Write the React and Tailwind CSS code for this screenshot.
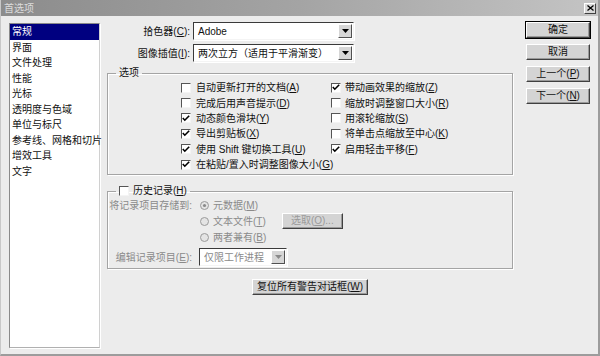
import React from 'react';

const font = "font-['Liberation_Sans','Noto_Sans_CJK_SC',sans-serif]";

// label with underlined mnemonic letter in parens
const M = ({ t, k }) => (
    <span className="whitespace-nowrap">
        {t}(<span className="underline underline-offset-1">{k}</span>)
    </span>
);

const Check = ({ checked }) => (
    <span className="w-[10px] h-[10px] shrink-0 bg-white border border-t-[#555] border-l-[#555] border-b-[#f4f4f4] border-r-[#f4f4f4] flex items-center justify-center">
        {checked && (
            <svg width="8" height="7" viewBox="0 0 8 7">
                <path d="M0.8 3 L2.8 5.2 L7.2 0.8" fill="none" stroke="#000" strokeWidth="1.6" />
            </svg>
        )}
    </span>
);

const Radio = ({ on }) => (
    <svg width="9" height="9" viewBox="0 0 9 9" className="shrink-0">
        <circle cx="4.5" cy="4.5" r="4" fill="#e4e4e4" stroke="#9a9a9a" />
        {on && <circle cx="4.5" cy="4.5" r="1.6" fill="#8a8a8a" />}
    </svg>
);

const Arrow = ({ disabled }) => (
    <span className="w-[14px] h-full shrink-0 bg-[#d6d6d6] border border-t-white border-l-white border-b-[#505050] border-r-[#505050] flex items-center justify-center">
        <svg width="7" height="4" viewBox="0 0 7 4">
            <path d="M0 0 H7 L3.5 4 Z" fill={disabled ? '#8a8a8a' : '#000'} />
        </svg>
    </span>
);

const Select = ({ value, w, disabled }) => (
    <div className={`${w} h-[18px] bg-white border border-t-[#3a3a3a] border-l-[#3a3a3a] border-b-[#f4f4f4] border-r-[#f4f4f4] shadow-[1px_1px_0_#fff] flex items-center p-px`}>
        <span className={`flex-1 pl-[3px] truncate ${disabled ? 'text-[#8a8a8a]' : ''}`}>{value}</span>
        <Arrow disabled={disabled} />
    </div>
);

const Btn = ({ children, def, disabled, className = '' }) => (
    <div className={`${className} ${def ? 'outline outline-1 outline-black' : ''} bg-[#d4d4d4] border border-t-white border-l-white border-b-[#404040] border-r-[#404040] shadow-[inset_-1px_-1px_0_#9a9a9a] flex items-center justify-center leading-none ${disabled ? 'text-[#9a9a9a]' : ''}`}>
        {children}
    </div>
);

const optLeft = [
    ['自动更新打开的文档', 'A', false],
    ['完成后用声音提示', 'D', false],
    ['动态颜色滑块', 'Y', true],
    ['导出剪贴板', 'X', true],
    ['使用 Shift 键切换工具', 'U', true],
    ['在粘贴/置入时调整图像大小', 'G', true],
];

const optRight = [
    ['带动画效果的缩放', 'Z', true],
    ['缩放时调整窗口大小', 'R', false],
    ['用滚轮缩放', 'S', false],
    ['将单击点缩放至中心', 'K', false],
    ['启用轻击平移', 'F', true],
];

const sections = ['常规', '界面', '文件处理', '性能', '光标', '透明度与色域', '单位与标尺', '参考线、网格和切片', '增效工具', '文字'];

export default function App() {
    return (
        <div className={`${font} w-[600px] h-[356px] bg-[#ececec] text-[10px] text-[#111] border-l border-l-[#c8c8c8] border-r-2 border-r-[#9c9c9c] border-b-2 border-b-[#9c9c9c] flex flex-col overflow-hidden`}>
            {/* Title bar */}
            <div className="h-[16px] shrink-0 bg-gradient-to-r from-[#8c8c8c] via-[#a4a4a4] to-[#c4c4c4] flex items-center justify-between pl-[3px] pr-[2px]">
                <span className="text-[#dcdcdc] text-[10px]">首选项</span>
                <div className="w-[12px] h-[11px] bg-[#d8d8d8] border border-t-white border-l-white border-b-[#404040] border-r-[#404040] flex items-center justify-center">
                    <svg width="7" height="6" viewBox="0 0 7 6">
                        <path d="M0.5 0.5 L6.5 5.5 M6.5 0.5 L0.5 5.5" stroke="#000" strokeWidth="1.3" />
                    </svg>
                </div>
            </div>

            <div className="flex flex-1 pl-[8px] pt-[6px] pb-[6px]">
                {/* Section list */}
                <div className="w-[91px] mt-[1px] bg-white border border-t-[#8a8a8a] border-l-[#8a8a8a] border-b-[#b0b0b0] border-r-[#d0d0d0] shadow-[1px_1px_0_#fff]">
                    {sections.map((s, i) => (
                        <div
                            key={s}
                            className={`h-[15.5px] flex items-center pl-[2px] whitespace-nowrap ${i === 0 ? 'bg-[#000080] text-white' : ''}`}
                        >
                            {s}
                        </div>
                    ))}
                </div>

                {/* Main column */}
                <div className="w-[406px] ml-[7px] flex flex-col">
                    <div className="flex items-center">
                        <span className="w-[86px] text-right pr-[3px]"><M t="拾色器" k="C" />:</span>
                        <Select value="Adobe" w="w-[161px]" />
                    </div>
                    <div className="flex items-center mt-[4px]">
                        <span className="w-[86px] text-right pr-[3px]"><M t="图像插值" k="I" />:</span>
                        <Select value="两次立方（适用于平滑渐变）" w="w-[161px]" />
                    </div>

                    <fieldset className="mt-[4px] border border-[#a4a4a4] shadow-[1px_1px_0_#fff,inset_1px_1px_0_#fff] pb-[2px]">
                        <legend className="ml-[8px] px-[3px] leading-[14px]">选项</legend>
                        <div className="flex pl-[73px]">
                            <div className="w-[150px] flex flex-col">
                                {optLeft.map(([t, k, c]) => (
                                    <div key={k} className="h-[15.4px] flex items-center gap-[5px]">
                                        <Check checked={c} />
                                        <M t={t} k={k} />
                                    </div>
                                ))}
                            </div>
                            <div className="flex flex-col">
                                {optRight.map(([t, k, c]) => (
                                    <div key={k} className="h-[15.4px] flex items-center gap-[4px]">
                                        <Check checked={c} />
                                        <M t={t} k={k} />
                                    </div>
                                ))}
                            </div>
                        </div>
                    </fieldset>

                    <fieldset className="mt-[9px] border border-[#a4a4a4] shadow-[1px_1px_0_#fff,inset_1px_1px_0_#fff] pb-[2px]">
                        <legend className="ml-[8px] px-[3px] leading-[14px] flex items-center gap-[4px]">
                            <Check />
                            <M t="历史记录" k="H" />
                        </legend>
                        <div className="flex text-[#8a8a8a] mt-[-1px]">
                            <span className="w-[84px] text-right h-[16px] flex items-center justify-end">将记录项目存储到:</span>
                            <div className="ml-[8px] flex flex-col">
                                <div className="h-[16px] flex items-center gap-[4px]">
                                    <Radio on />
                                    <M t="元数据" k="M" />
                                </div>
                                <div className="h-[16px] flex items-center gap-[4px]">
                                    <Radio />
                                    <M t="文本文件" k="T" />
                                    <Btn disabled className="ml-[12px] w-[61px] h-[16px]">
                                        <span>选取(<span className="underline">O</span>)...</span>
                                    </Btn>
                                </div>
                                <div className="h-[16px] flex items-center gap-[4px]">
                                    <Radio />
                                    <M t="两者兼有" k="B" />
                                </div>
                            </div>
                        </div>
                        <div className="flex items-center mt-[3px] text-[#8a8a8a]">
                            <span className="w-[84px] text-right"><M t="编辑记录项目" k="E" />:</span>
                            <div className="ml-[7px]">
                                <Select value="仅限工作进程" w="w-[88px]" disabled />
                            </div>
                        </div>
                    </fieldset>

                    <div className="flex justify-center mt-[10px]">
                        <Btn className="w-[116px] h-[16px]">
                            <span>复位所有警告对话框(<span className="underline">W</span>)</span>
                        </Btn>
                    </div>
                </div>

                {/* Buttons */}
                <div className="ml-[13px] w-[64px] flex flex-col gap-[6px]">
                    <Btn def className="h-[16px]">确定</Btn>
                    <Btn className="h-[16px]">取消</Btn>
                    <Btn className="h-[16px]"><M t="上一个" k="P" /></Btn>
                    <Btn className="h-[16px]"><M t="下一个" k="N" /></Btn>
                </div>
            </div>
        </div>
    );
}
